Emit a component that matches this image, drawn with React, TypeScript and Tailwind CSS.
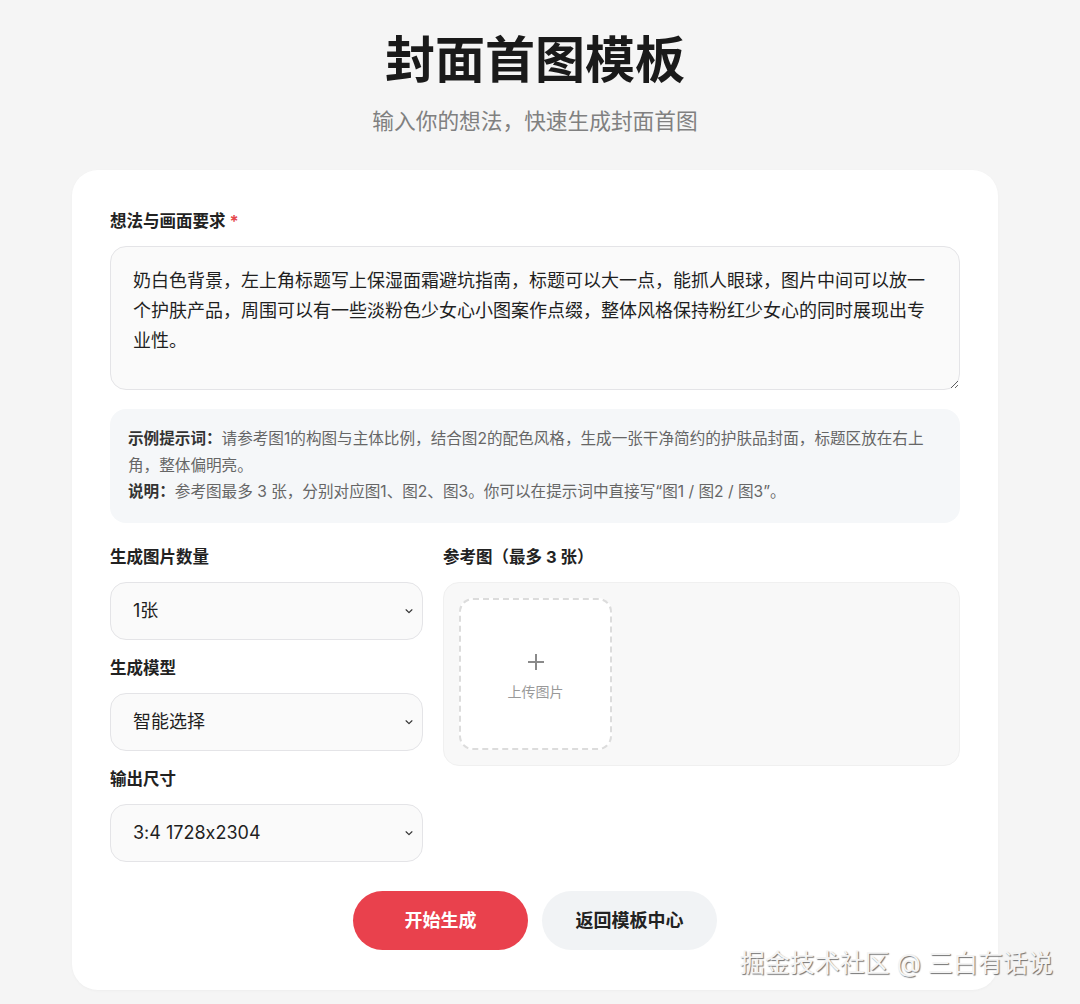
import React from "react";

const FONT = 'Inter, "Noto Sans CJK SC", "Noto Sans", sans-serif';

function Chevron() {
  return (
    <svg width="10" height="10" viewBox="0 0 12 12" fill="none" className="text-[#333]">
      <path d="M2.5 4.5 6 8l3.5-3.5" stroke="currentColor" strokeWidth="1.4" strokeLinecap="round" strokeLinejoin="round" />
    </svg>
  );
}

function SelectBox({ value }: { value: string }) {
  return (
    <div className="flex h-[58px] items-center justify-between rounded-2xl border border-[#e4e4e7] bg-[#fafafa] pl-[22px] pr-[8px] text-[18px] text-[#1f1f1f] [font-feature-settings:'calt'_0]">
      <span>{value}</span>
      <Chevron />
    </div>
  );
}

function Label({ children, required }: { children: React.ReactNode; required?: boolean }) {
  return (
    <div className="mb-[13px] h-6 text-[16.5px] font-bold leading-6 text-[#222]">
      {children}
      {required && <span className="ml-1 text-[#e5484d]">*</span>}
    </div>
  );
}

export default function App() {
  return (
    <div className="relative min-h-[1004px] w-full bg-[#f5f5f5]" style={{ fontFamily: FONT }}>
      <div className="w-[1070px] pt-[30px] pb-[14px]">
        <h1 className="text-center text-[50px] font-bold leading-[60px] text-[#1a1a1a]">封面首图模板</h1>
        <p className="mt-4 text-center text-[21.7px] leading-[30px] text-[#808080]">输入你的想法，快速生成封面首图</p>

        <div className="mx-auto mt-[34px] w-[926px] rounded-[26px] bg-white px-[38px] pt-[39px] pb-[40px] shadow-[0_1px_3px_rgba(0,0,0,0.03)]">
          <Label required>想法与画面要求</Label>
          <textarea
            readOnly
            className="block h-[144px] w-full resize-y rounded-2xl border border-[#e4e4e7] bg-[#fafafa] px-[22px] py-[19px] text-[18px] leading-[30px] text-[#1f1f1f] outline-none"
            style={{ fontFamily: FONT }}
            defaultValue="奶白色背景，左上角标题写上保湿面霜避坑指南，标题可以大一点，能抓人眼球，图片中间可以放一个护肤产品，周围可以有一些淡粉色少女心小图案作点缀，整体风格保持粉红少女心的同时展现出专业性。"
          />

          <div className="mt-[19px] rounded-2xl bg-[#f5f7f9] pl-[18px] pr-[24px] py-[17px] text-[15.6px] leading-[26.5px] text-[#666]">
            <p>
              <span className="font-bold text-[#333]">示例提示词：</span>
              <span>请参考图1的构图与主体比例，结合图2的配色风格，生成一张干净简约的护肤品封面，标题区放在右上角，整体偏明亮。</span>
            </p>
            <p>
              <span className="font-bold text-[#333]">说明：</span>
              <span>参考图最多 3 张，分别对应图1、图2、图3。你可以在提示词中直接写“图1 / 图2 / 图3”。</span>
            </p>
          </div>

          <div className="mt-[22px] grid grid-cols-[313px_1fr] gap-5">
            <div className="flex flex-col gap-4">
              <div>
                <Label>生成图片数量</Label>
                <SelectBox value="1张" />
              </div>
              <div>
                <Label>生成模型</Label>
                <SelectBox value="智能选择" />
              </div>
              <div>
                <Label>输出尺寸</Label>
                <SelectBox value="3:4 1728x2304" />
              </div>
            </div>
            <div>
              <Label>参考图（最多 3 张）</Label>
              <div className="h-[184px] rounded-2xl border border-[#f0f0f0] bg-[#f8f8f8] p-[15px]">
                <div className="flex h-[152px] w-[153px] flex-col items-center justify-center rounded-[14px] border-2 border-dashed border-[#dcdcdc] bg-white pt-[8px]">
                  <svg width="18" height="18" viewBox="0 0 18 18">
                    <path d="M9 1v16M1 9h16" stroke="#8a8a8a" strokeWidth="2" />
                  </svg>
                  <span className="mt-[10px] text-[14px] text-[#999]">上传图片</span>
                </div>
              </div>
            </div>
          </div>

          <div className="mt-[29px] flex justify-center gap-[14px]">
            <button className="h-[59px] w-[175px] rounded-full bg-[#e9414d] text-[18px] font-bold text-white">开始生成</button>
            <button className="h-[59px] w-[175px] rounded-full bg-[#f1f3f5] text-[18px] font-bold text-[#222]">返回模板中心</button>
          </div>
        </div>
      </div>

      <div className="absolute right-[27px] top-[945px] text-[25px] leading-[36px] text-[#f4f4f4] [text-shadow:1px_1px_1px_rgba(0,0,0,0.55)]">
        掘金技术社区 @ 三白有话说
      </div>
    </div>
  );
}
